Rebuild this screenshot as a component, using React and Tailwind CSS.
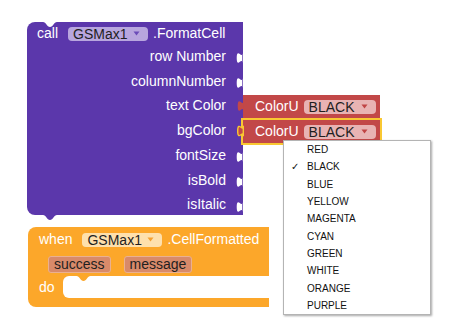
import React from 'react';

const PURPLE = '#5b37ab';
const RED = '#c24848';
const ORANGE = '#fca72a';

// geras style puzzle tab, drawn pointing left
function Tab({ fill, stroke, className }) {
  return (
    <svg className={className} viewBox="-9 -1 10 17" preserveAspectRatio="none">
      <path d="M 0,0 c 0,10 -8,-8 -8,7.5 s 8,-2.5 8,7.5 Z" fill={fill} stroke={stroke || 'none'} strokeWidth={stroke ? 2 : 0} />
    </svg>
  );
}

function Notch({ fill, className }) {
  return (
    <svg className={className} viewBox="0 0 14 5">
      <path d="M0 0 C3 0 4 5 7 5 C10 5 11 0 14 0 Z" fill={fill} />
    </svg>
  );
}

function Caret({ color }) {
  return (
    <svg width="7" height="5" viewBox="0 0 7 5" className="shrink-0">
      <path d="M0.5 0.5 L6.5 0.5 L3.5 4.5 Z" fill={color} />
    </svg>
  );
}

function Field({ label, bg, caret, className }) {
  return (
    <div className={`flex items-center justify-between rounded-[4px] pl-[5px] pr-[8px] text-[#1f1f1f] ${className}`} style={{ background: bg }}>
      <span className="leading-none">{label}</span>
      <Caret color={caret} />
    </div>
  );
}

const inputs = [
  { label: 'row Number', socket: true },
  { label: 'columnNumber', socket: true },
  { label: 'text Color', socket: false },
  { label: 'bgColor', socket: false },
  { label: 'fontSize', socket: true },
  { label: 'isBold', socket: true },
  { label: 'isItalic', socket: true },
];

const colors = ['RED', 'BLACK', 'BLUE', 'YELLOW', 'MAGENTA', 'CYAN', 'GREEN', 'WHITE', 'ORANGE', 'PURPLE'];

function ColorBlock({ selected, className }) {
  return (
    <div className={`absolute h-[23px] w-[137px] ${className}`}>
      <div
        className={`flex h-full items-center gap-[5px] pl-[12px] text-white ${selected ? 'outline-2 outline-[#f9c832]' : ''}`}
        style={{ background: RED }}
      >
        <span>ColorU</span>
        <Field label="BLACK" bg="#e8b3b3" caret="#c04444" className="h-[14px] w-[72px]" />
      </div>
      <Tab fill={RED} stroke={selected ? '#f9c832' : null} className="absolute left-[-6px] top-[5px] h-[12px] w-[7px]" />
    </div>
  );
}

export default function App() {
  return (
    <div className="relative h-[334px] w-[452px] overflow-hidden bg-white text-[14px]" style={{ fontFamily: '"Liberation Sans", Arial, sans-serif' }}>
      {/* call block */}
      <div className="absolute left-[27px] top-[22px] h-[193px] w-[216px] rounded-l-[8px]" style={{ background: PURPLE }}>
        <Notch fill="#ffffff" className="absolute left-[16px] top-0 h-[5px] w-[14px]" />
        <Notch fill={PURPLE} className="absolute bottom-[-5px] left-[16px] h-[5px] w-[14px]" />
        <div className="flex h-[22px] items-center pl-[10px] pt-[1px] text-white">
          <span>call</span>
          <Field label="GSMax1" bg="#b8a6de" caret="#6b4cb8" className="ml-[10px] h-[14px] w-[80px]" />
          <span className="ml-[5px]">.FormatCell</span>
        </div>
        <div className="flex flex-col">
          {inputs.map((r) => (
            <div key={r.label} className="relative flex h-[24.75px] items-center justify-end pr-[17px] text-white">
              <span>{r.label}</span>
              {r.socket && <Tab fill="#ffffff" className="absolute right-0 top-[8px] h-[12px] w-[7px]" />}
            </div>
          ))}
        </div>
      </div>

      <ColorBlock className="left-[243px] top-[95px]" />
      <ColorBlock selected className="left-[243px] top-[120px]" />

      {/* event block */}
      <div className="absolute left-[28px] top-[227px] flex h-[80px] w-[241px] flex-col rounded-l-[8px] text-white" style={{ background: ORANGE }}>
        <div className="flex h-[25px] items-center pl-[11px]">
          <span>when</span>
          <Field label="GSMax1" bg="#fee0ad" caret="#f5a030" className="ml-[10px] h-[14px] w-[80px]" />
          <span className="ml-[5px]">.CellFormatted</span>
        </div>
        <div className="flex h-[24px] items-center gap-[13px] pl-[20px]">
          <span className="flex h-[17px] items-center rounded-[3px] border border-[#eab091] bg-[#d88a6a] px-[5px] text-[#1f1f1f]">success</span>
          <span className="flex h-[17px] items-center rounded-[3px] border border-[#eab091] bg-[#d88a6a] px-[5px] text-[#1f1f1f]">message</span>
        </div>
        <div className="flex h-[22px] items-center">
          <span className="w-[35px] pl-[11px]">do</span>
          <div className="relative h-[22px] flex-1 rounded-l-[6px] bg-white">
            <Notch fill={ORANGE} className="absolute left-[13px] top-0 h-[5px] w-[15px]" />
          </div>
        </div>
      </div>

      {/* dropdown menu */}
      <div className="absolute left-[283px] top-[140px] flex w-[148px] flex-col border border-[#b4b4b4] bg-white text-[10px] text-[#111] shadow-[1px_1px_2px_rgba(0,0,0,0.35)]">
        {colors.map((c) => (
          <div key={c} className="relative flex h-[17.3px] items-center pl-[23px]">
            {c === 'BLACK' && <span className="absolute left-[7px] text-[10px]" style={{ fontFamily: '"DejaVu Sans", sans-serif' }}>✓</span>}
            <span>{c}</span>
          </div>
        ))}
      </div>
    </div>
  );
}
